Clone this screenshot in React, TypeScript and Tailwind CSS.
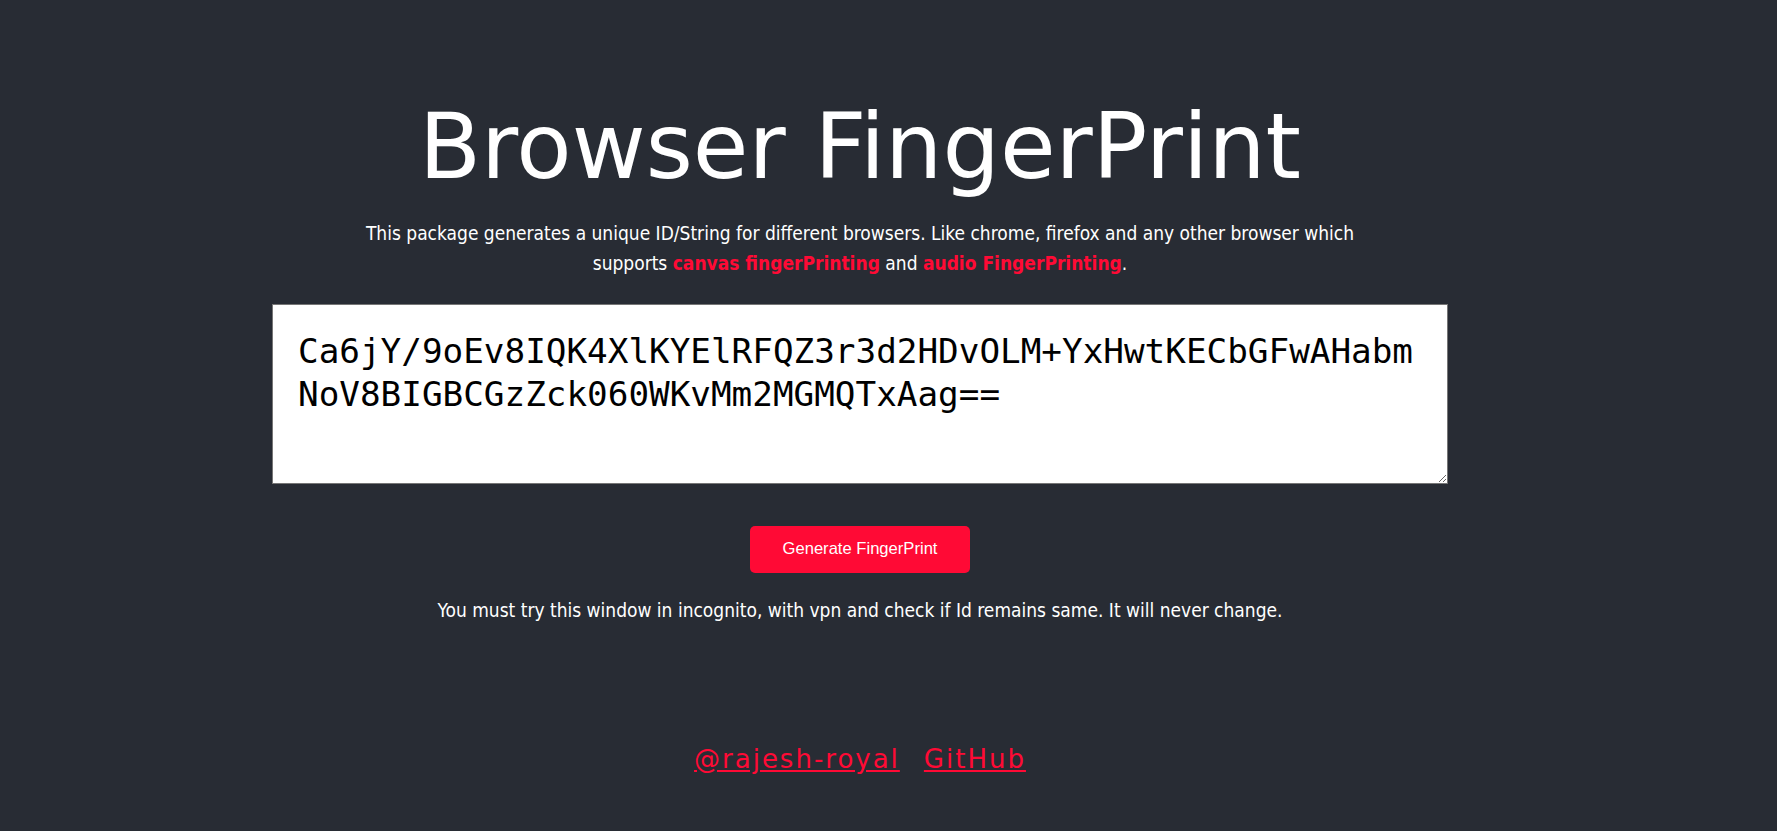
import React from "react";

const ID =
  "Ca6jY/9oEv8IQK4XlKYElRFQZ3r3d2HDvOLM+YxHwtKECbGFwAHabmNoV8BIGBCGzZck060WKvMm2MGMQTxAag==";

export default function App() {
  return (
    <div className="min-h-[831px] w-full bg-[#282c34] font-['DejaVu_Sans',sans-serif] text-white">
      <div className="flex w-[1720px] flex-col items-center">
        <h1 className="mt-[102px] text-[90.5px] leading-[90.5px] font-normal text-white">
          Browser FingerPrint
        </h1>
        <p className="mt-[25px] w-[1010px] text-center font-['DejaVu_Sans_Condensed','DejaVu_Sans',sans-serif] text-[19px] leading-[30px]">
          This package generates a unique ID/String for different browsers. Like chrome, firefox and any other browser which supports{" "}
          <span className="font-bold text-[#ff0a35]">canvas fingerPrinting</span> and{" "}
          <span className="font-bold text-[#ff0a35]">audio FingerPrinting</span>.
        </p>
        <textarea
          readOnly
          defaultValue={ID}
          className="mt-[26px] h-[180px] w-[1176px] resize border border-[#767676] bg-white px-[25px] pt-[25px] font-['DejaVu_Sans_Mono',monospace] text-[34.3px] leading-[43px] text-black outline-none"
        />
        <button className="mt-[42px] h-[47px] w-[220px] rounded-[5px] bg-[#ff0a35] font-['Liberation_Sans',Arial,sans-serif] text-[16.6px] text-white">
          Generate FingerPrint
        </button>
        <p className="mt-[24px] font-['DejaVu_Sans_Condensed','DejaVu_Sans',sans-serif] text-[19px] leading-[26px]">
          You must try this window in incognito, with vpn and check if Id remains same. It will never change.
        </p>
        <div className="mt-[121px] flex gap-[24px] font-['DejaVu_Sans',sans-serif] text-[26px] leading-[30px] tracking-[2px]">
          <a href="#" className="text-[#ff0a35] underline">
            @rajesh-royal
          </a>
          <a href="#" className="text-[#ff0a35] underline">
            GitHub
          </a>
        </div>
      </div>
    </div>
  );
}
